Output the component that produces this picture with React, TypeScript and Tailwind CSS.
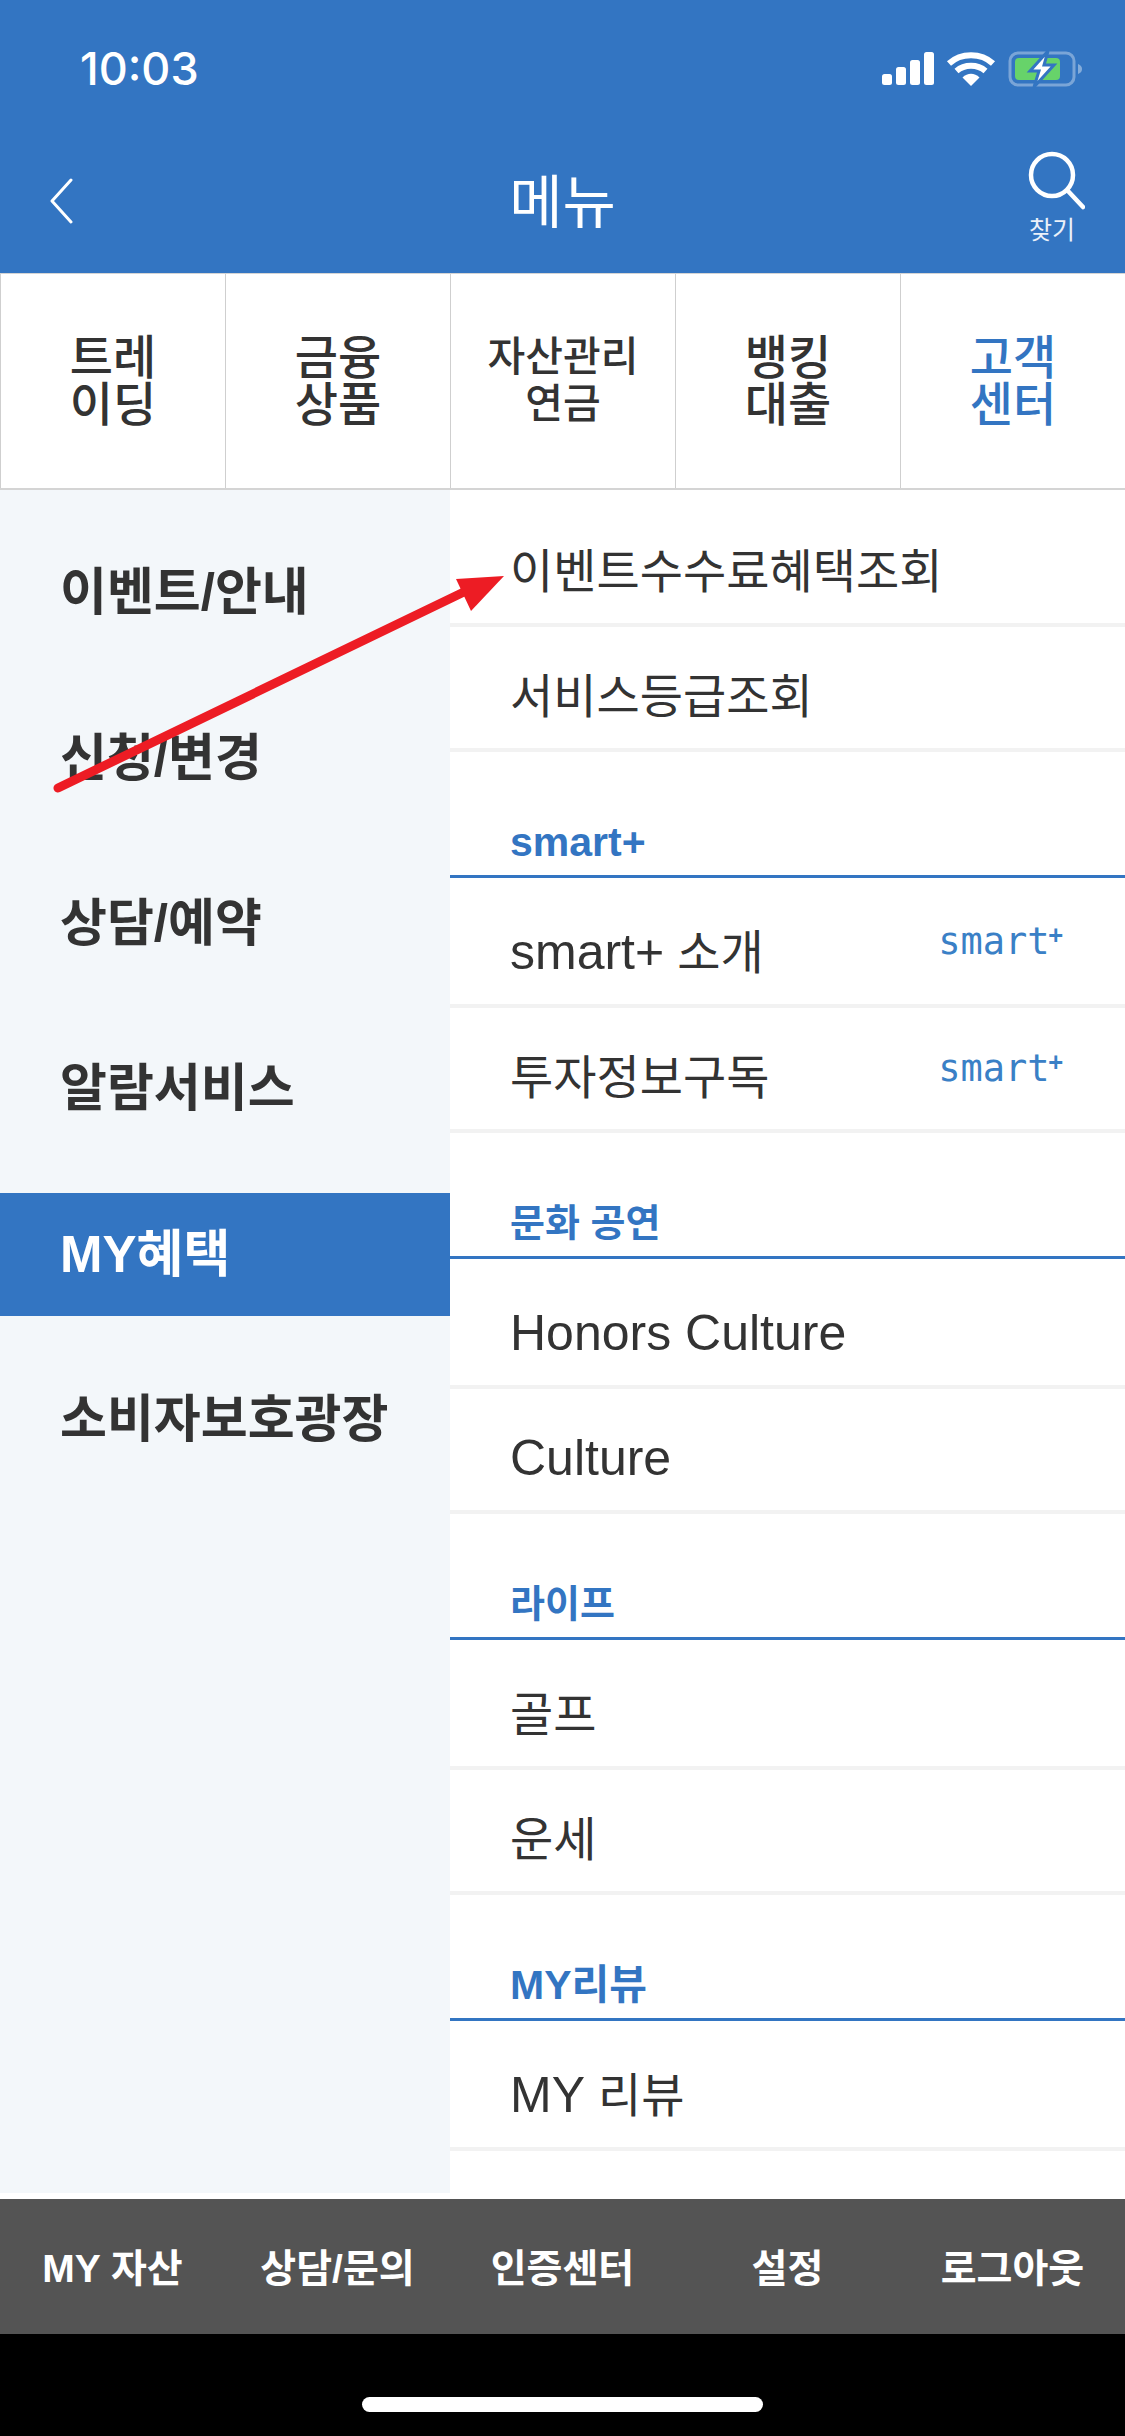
import React from 'react';

const FONT = { fontFamily: '"Liberation Sans", "Noto Sans CJK KR", sans-serif' };

const tabs = [
  { label: ['트레', '이딩'], small: false },
  { label: ['금융', '상품'], small: false },
  { label: ['자산관리', '연금'], small: true },
  { label: ['뱅킹', '대출'], small: false },
  { label: ['고객', '센터'], small: false, active: true },
];

const sideItems = ['이벤트/안내', '신청/변경', '상담/예약', '알람서비스', 'MY혜택', '소비자보호광장'];

const sections = [
  { title: 'smart+', latin: true, rows: [{ text: 'smart+', rest: ' 소개', badge: true }, { text: '투자정보구독', badge: true, korean: true }] },
  { title: '문화 공연', rows: [{ text: 'Honors Culture' }, { text: 'Culture' }] },
  { title: '라이프', rows: [{ text: '골프', korean: true }, { text: '운세', korean: true }] },
  { title: 'MY리뷰', latin: true, rows: [{ text: 'MY', rest: ' 리뷰' }] },
];

const footerItems = ['MY 자산', '상담/문의', '인증센터', '설정', '로그아웃'];

function StatusIcons() {
  return (
    <svg width="205" height="36" viewBox="0 0 205 36" fill="none">
      <rect x="0" y="23" width="10" height="11" rx="2.5" fill="#fff" />
      <rect x="14" y="16" width="10" height="18" rx="2.5" fill="#fff" />
      <rect x="28" y="9" width="10" height="25" rx="2.5" fill="#fff" />
      <rect x="42" y="1" width="10" height="33" rx="2.5" fill="#fff" />
      <path d="M67 12.5C79 1.5 99 1.5 111 12.5" stroke="#fff" strokeWidth="6" />
      <path d="M74.5 20C82.5 13 95.5 13 103.5 20" stroke="#fff" strokeWidth="6" />
      <path d="M80.5 26.5C85.5 21.5 92.5 21.5 97.5 26.5L89 35Z" fill="#fff" />
      <rect x="128" y="2" width="64" height="32" rx="8" stroke="#fff" strokeOpacity="0.35" strokeWidth="3" />
      <path d="M196 13C199 14 200 16 200 18C200 20 199 22 196 23Z" fill="#fff" fillOpacity="0.4" />
      <rect x="133" y="7" width="45" height="22" rx="4" fill="#67d36a" />
      <path d="M166 0L148 20H157L152 36L172 14H162Z" fill="#fff" stroke="#3375c2" strokeWidth="3" />
    </svg>
  );
}

function SmartBadge() {
  return (
    <span
      className="flex items-start text-[#3a80c6] leading-none"
      style={{ fontFamily: '"DejaVu Sans Mono", monospace' }}
    >
      <span className="text-[37px] leading-[36px]">smart</span>
      <span className="text-[24px] leading-[24px] font-bold -ml-[1px] -mt-[1px]">+</span>
    </span>
  );
}

function ListRow({ text, rest, badge, korean, first, className }: { text: string; rest?: string; badge?: boolean; korean?: boolean; first?: boolean; className: string }) {
  return (
    <div className={`relative flex items-end pl-[60px] pr-[42px] pb-[17px] border-b-4 border-[#f2f2f2] ${className}`}>
      <span className="leading-[46px] text-[#333] whitespace-pre">
        <span className={korean ? 'text-[47px]' : 'text-[50px]'}>{text}</span>
        {rest && <span className="text-[47px]">{rest}</span>}
      </span>
      {badge && (
        <span className={`absolute right-[62px] ${first ? 'top-[46px]' : 'top-[43px]'}`}>
          <SmartBadge />
        </span>
      )}
    </div>
  );
}

export default function App() {
  return (
    <div className="relative w-[1125px] h-[2436px] bg-white flex flex-col overflow-hidden" style={FONT}>
      {/* header */}
      <header className="h-[273px] shrink-0 bg-[#3375c2] text-white flex flex-col">
        <div className="h-[136px] flex items-start justify-between pt-[47px] pl-[80px] pr-[38px]">
          <span className="text-[45px] leading-[44px] font-medium" style={{ fontFamily: 'Inter, sans-serif' }}>
            10:03
          </span>
          <div className="pt-[4px]">
            <StatusIcons />
          </div>
        </div>
        <div className="relative flex-1 flex items-start justify-center">
          <svg className="absolute left-[48px] top-[42px]" width="26" height="46" viewBox="0 0 26 46" fill="none">
            <path d="M23 2L4 23L23 44" stroke="#fff" strokeWidth="3" strokeLinecap="round" strokeLinejoin="round" />
          </svg>
          <span className="text-[58px] leading-[64px] mt-[35px]">메뉴</span>
          <div className="absolute right-[40px] top-[14px] flex flex-col items-center">
            <svg width="58" height="60" viewBox="0 0 58 60" fill="none">
              <circle cx="25" cy="25" r="21" stroke="#fff" strokeWidth="4.5" />
              <path d="M41 41L56 57" stroke="#fff" strokeWidth="4.5" strokeLinecap="round" />
            </svg>
            <span className="text-[25px] leading-[28px] text-white/90 mt-[6px] mr-[8px]">찾기</span>
          </div>
        </div>
      </header>

      {/* top tabs */}
      <nav className="h-[217px] shrink-0 grid grid-cols-5 border-t border-b-2 border-[#d4d4d4]">
        {tabs.map((tab, i) => (
          <div
            key={i}
            className={`flex flex-col items-center justify-center font-medium border-l border-[#cfcfcf] ${tab.active ? 'text-[#3375c2]' : 'text-[#333]'} ${tab.small ? 'text-[41px] leading-[47px]' : 'text-[47px] leading-[47px]'}`}
          >
            {tab.label.map((line) => (
              <span key={line}>{line}</span>
            ))}
          </div>
        ))}
      </nav>

      {/* body */}
      <div className="flex-1 flex min-h-0">
        <aside className="w-[450px] shrink-0 h-[1703px] bg-[#f3f7fa] flex flex-col pt-[21px]">
          {sideItems.map((item) => (
            <div
              key={item}
              className={`h-[165.3px] shrink-0 flex items-center pl-[60px] text-[51px] font-bold ${
                item === 'MY혜택' ? 'text-white' : 'text-[#333]'
              }`}
            >
              <span
                className={
                  item === 'MY혜택'
                    ? 'h-[123px] -ml-[60px] pl-[60px] w-[450px] flex items-center bg-[#3375c2]'
                    : ''
                }
              >
                {item}
              </span>
            </div>
          ))}
        </aside>

        <main className="flex-1 flex flex-col">
          <ListRow text="이벤트수수료혜택조회" korean className="h-[137px]" />
          <ListRow text="서비스등급조회" korean className="h-[125px]" />
          {sections.map((section) => (
            <section key={section.title}>
              <div className="h-[126px] flex items-end pl-[60px] pb-[13px] border-b-[3px] border-[#3375c2]">
                <span className={`leading-[40px] font-bold text-[#3375c2] ${section.latin ? 'text-[41px]' : 'text-[38px]'}`}>
                  {section.title}
                </span>
              </div>
              {section.rows.map((row, i) => (
                <ListRow
                  key={row.text}
                  text={row.text}
                  rest={row.rest}
                  badge={row.badge}
                  korean={row.korean}
                  first={i === 0}
                  className={i === 0 ? 'h-[130px]' : 'h-[125px]'}
                />
              ))}
            </section>
          ))}
        </main>
      </div>

      {/* footer */}
      <footer className="h-[135px] shrink-0 bg-[#545454] grid grid-cols-5 items-center pt-[6px] text-white text-[39px] font-bold text-center">
        {footerItems.map((item) => (
          <span key={item}>{item}</span>
        ))}
      </footer>

      {/* home indicator */}
      <div className="h-[102px] shrink-0 bg-black flex justify-center pt-[63px]">
        <div className="w-[401px] h-[15px] rounded-full bg-white" />
      </div>

      {/* annotation arrow drawn over the screenshot */}
      <svg className="absolute left-0 top-0 pointer-events-none" width="1125" height="2436" fill="none">
        <path d="M58 788L468 590" stroke="#ed1c24" strokeWidth="9" strokeLinecap="round" />
        <path d="M504 576L456 579L471 611Z" fill="#ed1c24" />
      </svg>
    </div>
  );
}
